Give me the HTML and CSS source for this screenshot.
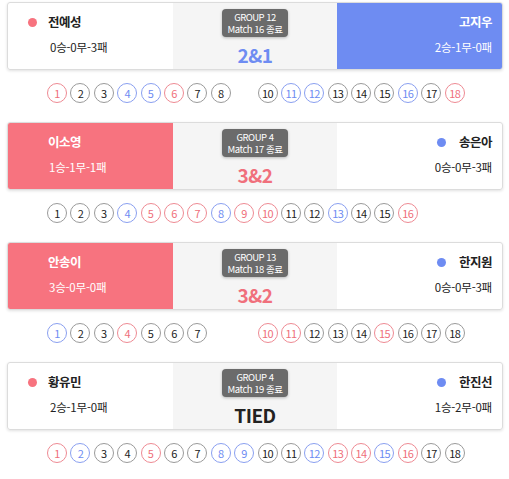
FILE: index.html
```html
<!DOCTYPE html>
<html lang="ko">
<head>
    <meta charset="UTF-8">
    <title>매치 결과</title>
    <link rel="stylesheet" href="styles.css">
</head>
<body>
    <div class="list">

        <div class="match">
            <div class="card">
                <div class="side left">
                    <div class="name"><span class="dot red"></span>전예성</div>
                    <div class="record">0승-0무-3패</div>
                </div>
                <div class="center">
                    <div class="badge">GROUP 12<br>Match 16 종료</div>
                    <div class="score blue">2&amp;1</div>
                </div>
                <div class="side right win-blue">
                    <div class="name"><span class="dot blue"></span>고지우</div>
                    <div class="record">2승-1무-0패</div>
                </div>
            </div>
            <div class="holes">
                <span class="hole r">1</span>
                <span class="hole">2</span>
                <span class="hole">3</span>
                <span class="hole b">4</span>
                <span class="hole b">5</span>
                <span class="hole r">6</span>
                <span class="hole">7</span>
                <span class="hole">8</span>
                <span class="hole empty"></span>
                <span class="hole">10</span>
                <span class="hole b">11</span>
                <span class="hole b">12</span>
                <span class="hole">13</span>
                <span class="hole">14</span>
                <span class="hole">15</span>
                <span class="hole b">16</span>
                <span class="hole">17</span>
                <span class="hole r">18</span>
            </div>
        </div>

        <div class="match">
            <div class="card">
                <div class="side left win-red">
                    <div class="name"><span class="dot red"></span>이소영</div>
                    <div class="record">1승-1무-1패</div>
                </div>
                <div class="center">
                    <div class="badge">GROUP 4<br>Match 17 종료</div>
                    <div class="score red">3&amp;2</div>
                </div>
                <div class="side right">
                    <div class="name"><span class="dot blue"></span>송은아</div>
                    <div class="record">0승-0무-3패</div>
                </div>
            </div>
            <div class="holes">
                <span class="hole">1</span>
                <span class="hole">2</span>
                <span class="hole">3</span>
                <span class="hole b">4</span>
                <span class="hole r">5</span>
                <span class="hole r">6</span>
                <span class="hole r">7</span>
                <span class="hole b">8</span>
                <span class="hole r">9</span>
                <span class="hole r">10</span>
                <span class="hole">11</span>
                <span class="hole">12</span>
                <span class="hole b">13</span>
                <span class="hole">14</span>
                <span class="hole">15</span>
                <span class="hole r">16</span>
            </div>
        </div>

        <div class="match">
            <div class="card">
                <div class="side left win-red">
                    <div class="name"><span class="dot red"></span>안송이</div>
                    <div class="record">3승-0무-0패</div>
                </div>
                <div class="center">
                    <div class="badge">GROUP 13<br>Match 18 종료</div>
                    <div class="score red">3&amp;2</div>
                </div>
                <div class="side right">
                    <div class="name"><span class="dot blue"></span>한지원</div>
                    <div class="record">0승-0무-3패</div>
                </div>
            </div>
            <div class="holes">
                <span class="hole b">1</span>
                <span class="hole">2</span>
                <span class="hole">3</span>
                <span class="hole r">4</span>
                <span class="hole">5</span>
                <span class="hole">6</span>
                <span class="hole">7</span>
                <span class="hole empty"></span>
                <span class="hole empty"></span>
                <span class="hole r">10</span>
                <span class="hole r">11</span>
                <span class="hole">12</span>
                <span class="hole">13</span>
                <span class="hole">14</span>
                <span class="hole r">15</span>
                <span class="hole">16</span>
                <span class="hole">17</span>
                <span class="hole">18</span>
            </div>
        </div>

        <div class="match">
            <div class="card">
                <div class="side left">
                    <div class="name"><span class="dot red"></span>황유민</div>
                    <div class="record">2승-1무-0패</div>
                </div>
                <div class="center">
                    <div class="badge">GROUP 4<br>Match 19 종료</div>
                    <div class="score">TIED</div>
                </div>
                <div class="side right">
                    <div class="name"><span class="dot blue"></span>한진선</div>
                    <div class="record">1승-2무-0패</div>
                </div>
            </div>
            <div class="holes">
                <span class="hole r">1</span>
                <span class="hole b">2</span>
                <span class="hole">3</span>
                <span class="hole">4</span>
                <span class="hole r">5</span>
                <span class="hole">6</span>
                <span class="hole">7</span>
                <span class="hole b">8</span>
                <span class="hole b">9</span>
                <span class="hole">10</span>
                <span class="hole">11</span>
                <span class="hole b">12</span>
                <span class="hole r">13</span>
                <span class="hole r">14</span>
                <span class="hole b">15</span>
                <span class="hole r">16</span>
                <span class="hole">17</span>
                <span class="hole">18</span>
            </div>
        </div>

    </div>
</body>
</html>
```

FILE: styles.css
```css
body {
    margin: 0;
    background: #fff;
    font-family: "Noto Sans CJK KR", "Noto Sans", sans-serif;
    color: #222;
}
.list {
    padding: 2px 6px 0 7px;
}
.match {
    margin-bottom: 19px;
}
.card {
    display: grid;
    grid-template-columns: 1fr 1fr 1fr;
    height: 68px;
    box-sizing: border-box;
    border: 1px solid #dcdcdc;
    border-radius: 3px;
    box-shadow: 0 1px 3px rgba(0, 0, 0, 0.12);
    overflow: hidden;
}
.side {
    padding-top: 9px;
    min-width: 0;
}
.left {
    padding-left: 20px;
}
.right {
    padding-right: 10px;
    text-align: right;
}
.name {
    font-size: 12.5px;
    font-weight: bold;
    line-height: 20px;
    letter-spacing: -0.5px;
    display: flex;
    align-items: center;
}
.right .name {
    justify-content: flex-end;
}
.dot {
    width: 9px;
    height: 9px;
    border-radius: 50%;
    margin-right: 11px;
}
.right .dot {
    margin-right: 13px;
}
.dot.red {
    background: #f7737f;
}
.dot.blue {
    background: #6e8cf2;
}
.record {
    font-size: 11.5px;
    line-height: 18px;
    margin-top: 6px;
    letter-spacing: -0.2px;
}
.left .record {
    padding-left: 22px;
}
.win-red {
    background: #f7737f;
    color: #fff;
}
.win-blue {
    background: #6e8cf2;
    color: #fff;
}
.win-red .dot {
    visibility: hidden;
}
.win-blue .dot {
    display: none;
}
.win-red .record {
    padding-left: 21px;
}
.center {
    background: #f5f5f5;
    display: flex;
    flex-direction: column;
    align-items: center;
    padding-top: 6px;
}
.badge {
    background: #6b6b6b;
    color: #fff;
    border-radius: 4px;
    box-shadow: 0 1px 3px rgba(0, 0, 0, 0.25);
    font-size: 9.5px;
    line-height: 12px;
    letter-spacing: -0.5px;
    text-align: center;
    padding: 2px 6px;
}
.score {
    font-size: 19px;
    font-weight: bold;
    line-height: 22px;
    margin-top: 7px;
    letter-spacing: -0.5px;
    color: #222;
}
.score.blue {
    color: #6e8cf2;
}
.score.red {
    color: #f0707c;
}
.holes {
    display: flex;
    gap: 3.4px;
    margin-top: 13px;
    padding-left: 40px;
}
.hole {
    width: 20px;
    height: 20px;
    box-sizing: border-box;
    border: 1px solid #9a9a9a;
    border-radius: 50%;
    font-size: 11px;
    line-height: 18px;
    text-align: center;
    letter-spacing: -0.6px;
    color: #222;
}
.hole.r {
    border-color: #ee8a93;
    color: #ef6f7b;
}
.hole.b {
    border-color: #8a9ff0;
    color: #6e8cf2;
}
.hole.empty {
    visibility: hidden;
}
```
